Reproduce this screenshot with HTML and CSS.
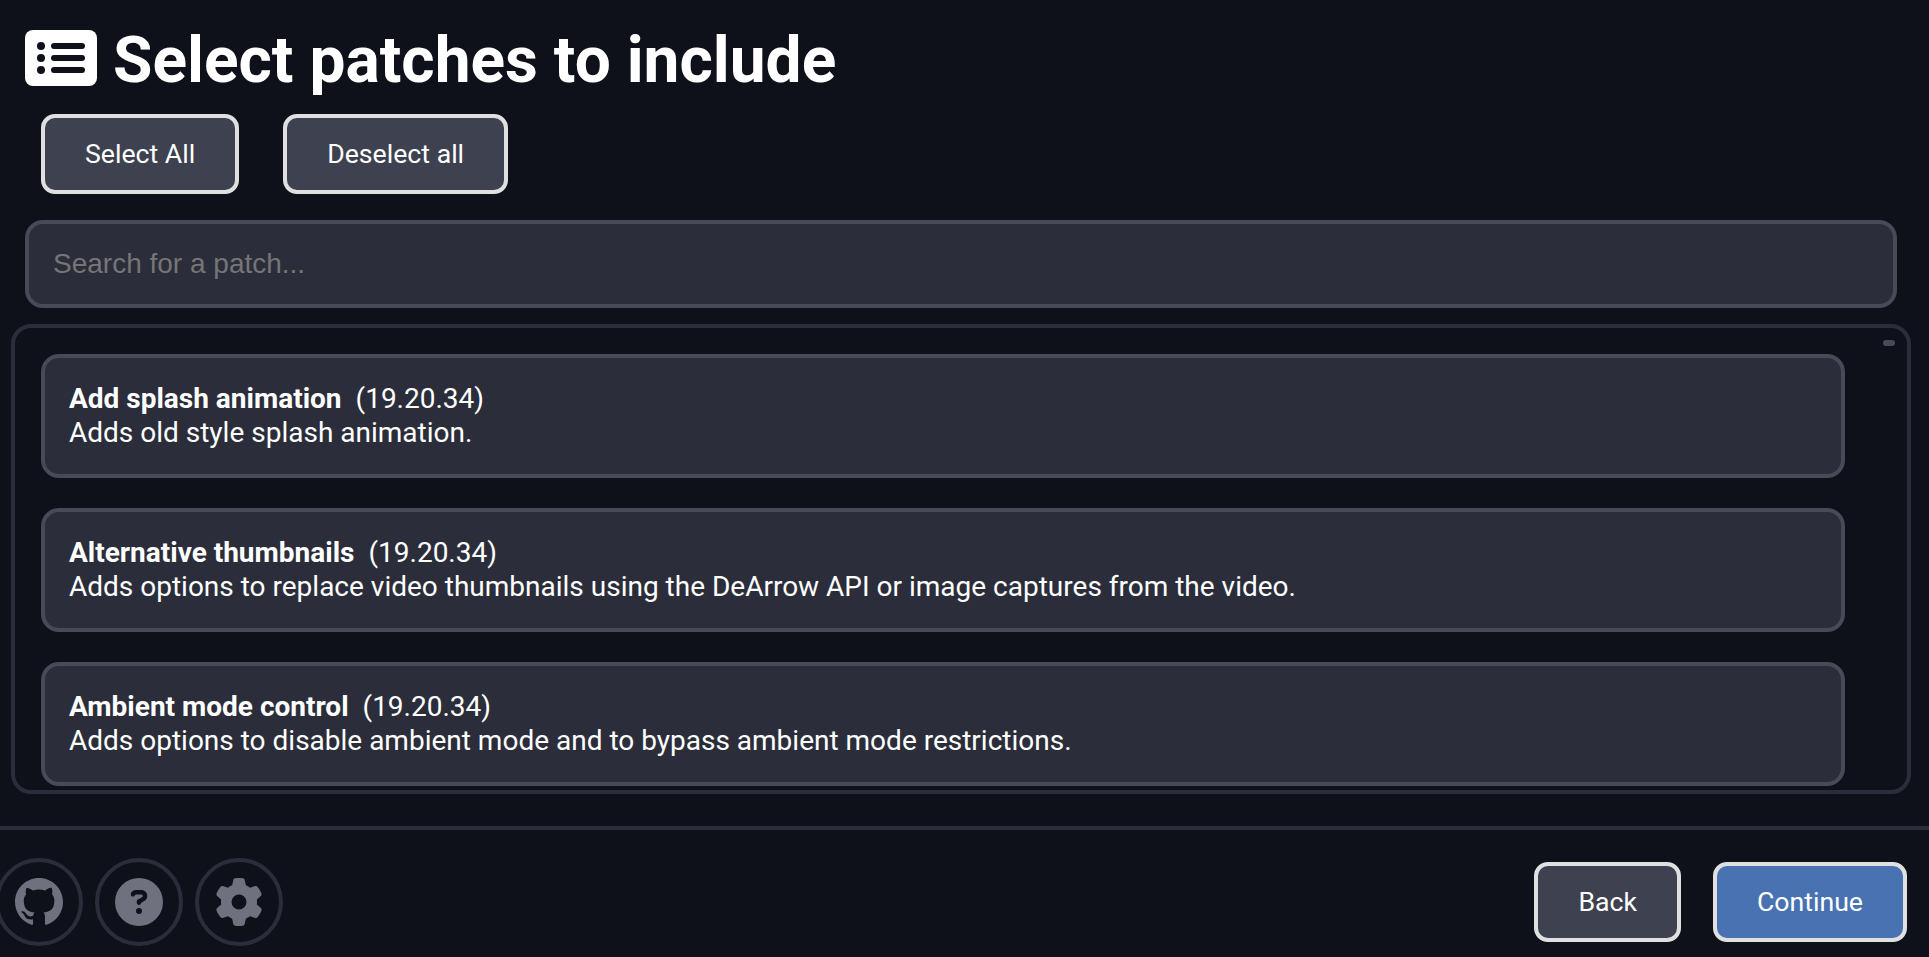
FILE: index.html
```html
<!DOCTYPE html>
<html lang="en">
<head>
    <meta charset="UTF-8">
    <meta name="viewport" content="width=device-width, initial-scale=1.0">
    <title>Select patches</title>
    <link rel="stylesheet" href="styles.css">
</head>
<body>

    <div class="page">
        <main class="content">
            <h1 class="title">
                <svg class="title-icon" viewBox="0 0 72 56" aria-hidden="true">
                    <rect width="72" height="56" rx="8" fill="#fff"/>
                    <g fill="#0e111a">
                        <circle cx="16" cy="16" r="4"/>
                        <circle cx="16" cy="28" r="4"/>
                        <circle cx="16" cy="40" r="4"/>
                        <rect x="26" y="13" width="34" height="6" rx="3"/>
                        <rect x="26" y="25" width="34" height="6" rx="3"/>
                        <rect x="26" y="37" width="34" height="6" rx="3"/>
                    </g>
                </svg>
                <span class="title-text">Select patches to include</span>
            </h1>

            <div class="actions">
                <button class="btn" type="button">Select All</button>
                <button class="btn" type="button">Deselect all</button>
            </div>

            <input class="search" type="text" placeholder="Search for a patch...">

            <div class="patch-list">
                <div class="patch">
                    <div><strong>Add splash animation</strong><span class="version">(19.20.34)</span></div>
                    <div>Adds old style splash animation.</div>
                </div>
                <div class="patch">
                    <div><strong>Alternative thumbnails</strong><span class="version">(19.20.34)</span></div>
                    <div>Adds options to replace video thumbnails using the DeArrow API or image captures from the video.</div>
                </div>
                <div class="patch">
                    <div><strong>Ambient mode control</strong><span class="version">(19.20.34)</span></div>
                    <div>Adds options to disable ambient mode and to bypass ambient mode restrictions.</div>
                </div>
                <span class="scroll-thumb"></span>
            </div>
        </main>

        <footer class="footer">
            <div class="links">
                <a class="round-link" href="#" aria-label="GitHub">
                    <svg viewBox="0 0 16 16"><path d="M8 0C3.58 0 0 3.58 0 8c0 3.54 2.29 6.53 5.47 7.59.4.07.55-.17.55-.38 0-.19-.01-.82-.01-1.49-2.01.37-2.53-.49-2.69-.94-.09-.23-.48-.94-.82-1.13-.28-.15-.68-.52-.01-.53.63-.01 1.08.58 1.23.82.72 1.21 1.87.87 2.33.66.07-.52.28-.87.51-1.07-1.78-.2-3.64-.89-3.64-3.95 0-.87.31-1.59.82-2.15-.08-.2-.36-1.02.08-2.12 0 0 .67-.21 2.2.82.64-.18 1.32-.27 2-.27.68 0 1.36.09 2 .27 1.53-1.04 2.2-.82 2.2-.82.44 1.1.16 1.92.08 2.12.51.56.82 1.27.82 2.15 0 3.07-1.87 3.75-3.65 3.95.29.25.54.73.54 1.48 0 1.07-.01 1.93-.01 2.2 0 .21.15.46.55.38A8.013 8.013 0 0016 8c0-4.42-3.58-8-8-8z"/></svg>
                </a>
                <a class="round-link" href="#" aria-label="Help">
                    <svg viewBox="0 0 512 512"><path d="M256 512A256 256 0 1 0 256 0a256 256 0 1 0 0 512zM169.8 165.3c7.9-22.3 29.1-37.3 52.8-37.3h58.3c34.9 0 63.1 28.3 63.1 63.1c0 22.6-12.1 43.5-31.7 54.8L280 264.4c-.2 13-10.9 23.6-24 23.6c-13.3 0-24-10.7-24-24V250.5c0-8.6 4.6-16.5 12.1-20.8l44.3-25.4c4.7-2.7 7.6-7.7 7.6-13.1c0-8.4-6.8-15.1-15.1-15.1H222.6c-3.4 0-6.4 2.1-7.5 5.3l-.4 1.2c-4.4 12.5-18.2 19-30.6 14.6s-19-18.2-14.6-30.6l.4-1.2zM224 352a32 32 0 1 1 64 0 32 32 0 1 1 -64 0z"/></svg>
                </a>
                <a class="round-link" href="#" aria-label="Settings">
                    <svg viewBox="0 0 512 512"><path d="M495.9 166.6c3.2 8.7 .5 18.4-6.4 24.6l-43.3 39.4c1.1 8.3 1.7 16.8 1.7 25.4s-.6 17.1-1.7 25.4l43.3 39.4c6.9 6.2 9.6 15.9 6.4 24.6c-4.4 11.9-9.7 23.3-15.8 34.3l-4.7 8.1c-6.6 11-14 21.4-22.1 31.2c-5.9 7.2-15.7 9.6-24.5 6.8l-55.7-17.7c-13.4 10.3-28.2 18.9-44 25.4l-12.5 57.1c-2 9.1-9 16.3-18.2 17.8c-13.8 2.3-28 3.5-42.5 3.5s-28.7-1.2-42.5-3.5c-9.2-1.5-16.2-8.7-18.2-17.8l-12.5-57.1c-15.8-6.5-30.6-15.1-44-25.4L83.1 425.9c-8.8 2.8-18.6 .3-24.5-6.8c-8.1-9.8-15.5-20.2-22.1-31.2l-4.7-8.1c-6.1-11-11.4-22.4-15.8-34.3c-3.2-8.7-.5-18.4 6.4-24.6l43.3-39.4C64.6 273.1 64 264.6 64 256s.6-17.1 1.7-25.4L22.4 191.2c-6.9-6.2-9.6-15.9-6.4-24.6c4.4-11.9 9.7-23.3 15.8-34.3l4.7-8.1c6.6-11 14-21.4 22.1-31.2c5.9-7.2 15.7-9.6 24.5-6.8l55.7 17.7c13.4-10.3 28.2-18.9 44-25.4l12.5-57.1c2-9.1 9-16.3 18.2-17.8C227.3 1.2 241.5 0 256 0s28.7 1.2 42.5 3.5c9.2 1.5 16.2 8.7 18.2 17.8l12.5 57.1c15.8 6.5 30.6 15.1 44 25.4l55.7-17.7c8.8-2.8 18.6-.3 24.5 6.8c8.1 9.8 15.5 20.2 22.1 31.2l4.7 8.1c6.1 11 11.4 22.4 15.8 34.3zM256 336a80 80 0 1 0 0-160 80 80 0 1 0 0 160z"/></svg>
                </a>
            </div>
            <div class="nav-buttons">
                <button class="btn" type="button">Back</button>
                <button class="btn btn-primary" type="button">Continue</button>
            </div>
        </footer>
    </div>

</body>
</html>
```

FILE: styles.css
```css
* {
    margin: 0;
    padding: 0;
    box-sizing: border-box;
    font-family: "Roboto", sans-serif;
}

body {
    height: 100vh;
    overflow: hidden;
    background: #0e111a;
    color: #fff;
}

.page {
    height: 100%;
    display: flex;
    flex-direction: column;
}

.content {
    flex: 1;
    display: flex;
    flex-direction: column;
    padding: 30px 18px 32px 11px;
}

.title {
    display: flex;
    align-items: center;
    gap: 16px;
    height: 56px;
    margin-left: 14px;
    font-size: 64px;
    font-weight: 700;
}

.title-icon {
    width: 72px;
    height: 56px;
    flex-shrink: 0;
}

.title-text {
    padding-top: 5px;
}

.actions {
    display: flex;
    gap: 44px;
    margin: 28px 0 26px 30px;
}

.btn {
    height: 80px;
    padding: 0 40px;
    background: #3e414f;
    border: 4px solid #e0e0e0;
    border-radius: 14px;
    color: #fff;
    font-size: 26.67px;
}

.btn-primary {
    background: #4872b1;
}

.search {
    width: 1872px;
    height: 88px;
    margin-left: 14px;
    padding: 0 24px;
    background: #2b2e3a;
    border: 4px solid #484a58;
    border-radius: 18px;
    color: #fff;
    font-family: "Liberation Sans", sans-serif;
    font-size: 28px;
}

.search::placeholder {
    color: #757575;
}

.patch-list {
    position: relative;
    flex: 1;
    display: flex;
    flex-direction: column;
    gap: 30px;
    margin-top: 16px;
    padding: 26px 62px 0 26px;
    overflow: hidden;
    background: #0e1119;
    border: 4px solid #2b2e3a;
    border-radius: 20px;
}

.patch {
    flex-shrink: 0;
    height: 124px;
    padding: 24px;
    background: #2b2e3a;
    border: 4px solid #484a58;
    border-radius: 18px;
    font-size: 28px;
    line-height: 34px;
}

.version {
    margin-left: 14px;
}

.scroll-thumb {
    position: absolute;
    top: 12px;
    right: 12px;
    width: 12px;
    height: 6px;
    background: #484a58;
    border-radius: 3px;
}

.footer {
    display: flex;
    align-items: center;
    justify-content: space-between;
    height: 131px;
    padding: 17px 22px 0 0;
    border-top: 4px solid #2b2e3a;
}

.links {
    display: flex;
    gap: 12px;
    margin-left: -5px;
}

.round-link {
    width: 88px;
    height: 88px;
    display: flex;
    align-items: center;
    justify-content: center;
    border: 4px solid #2b2e3a;
    border-radius: 50%;
}

.round-link svg {
    width: 48px;
    height: 48px;
    fill: #6f717e;
}

.nav-buttons {
    display: flex;
    gap: 32px;
}
```
